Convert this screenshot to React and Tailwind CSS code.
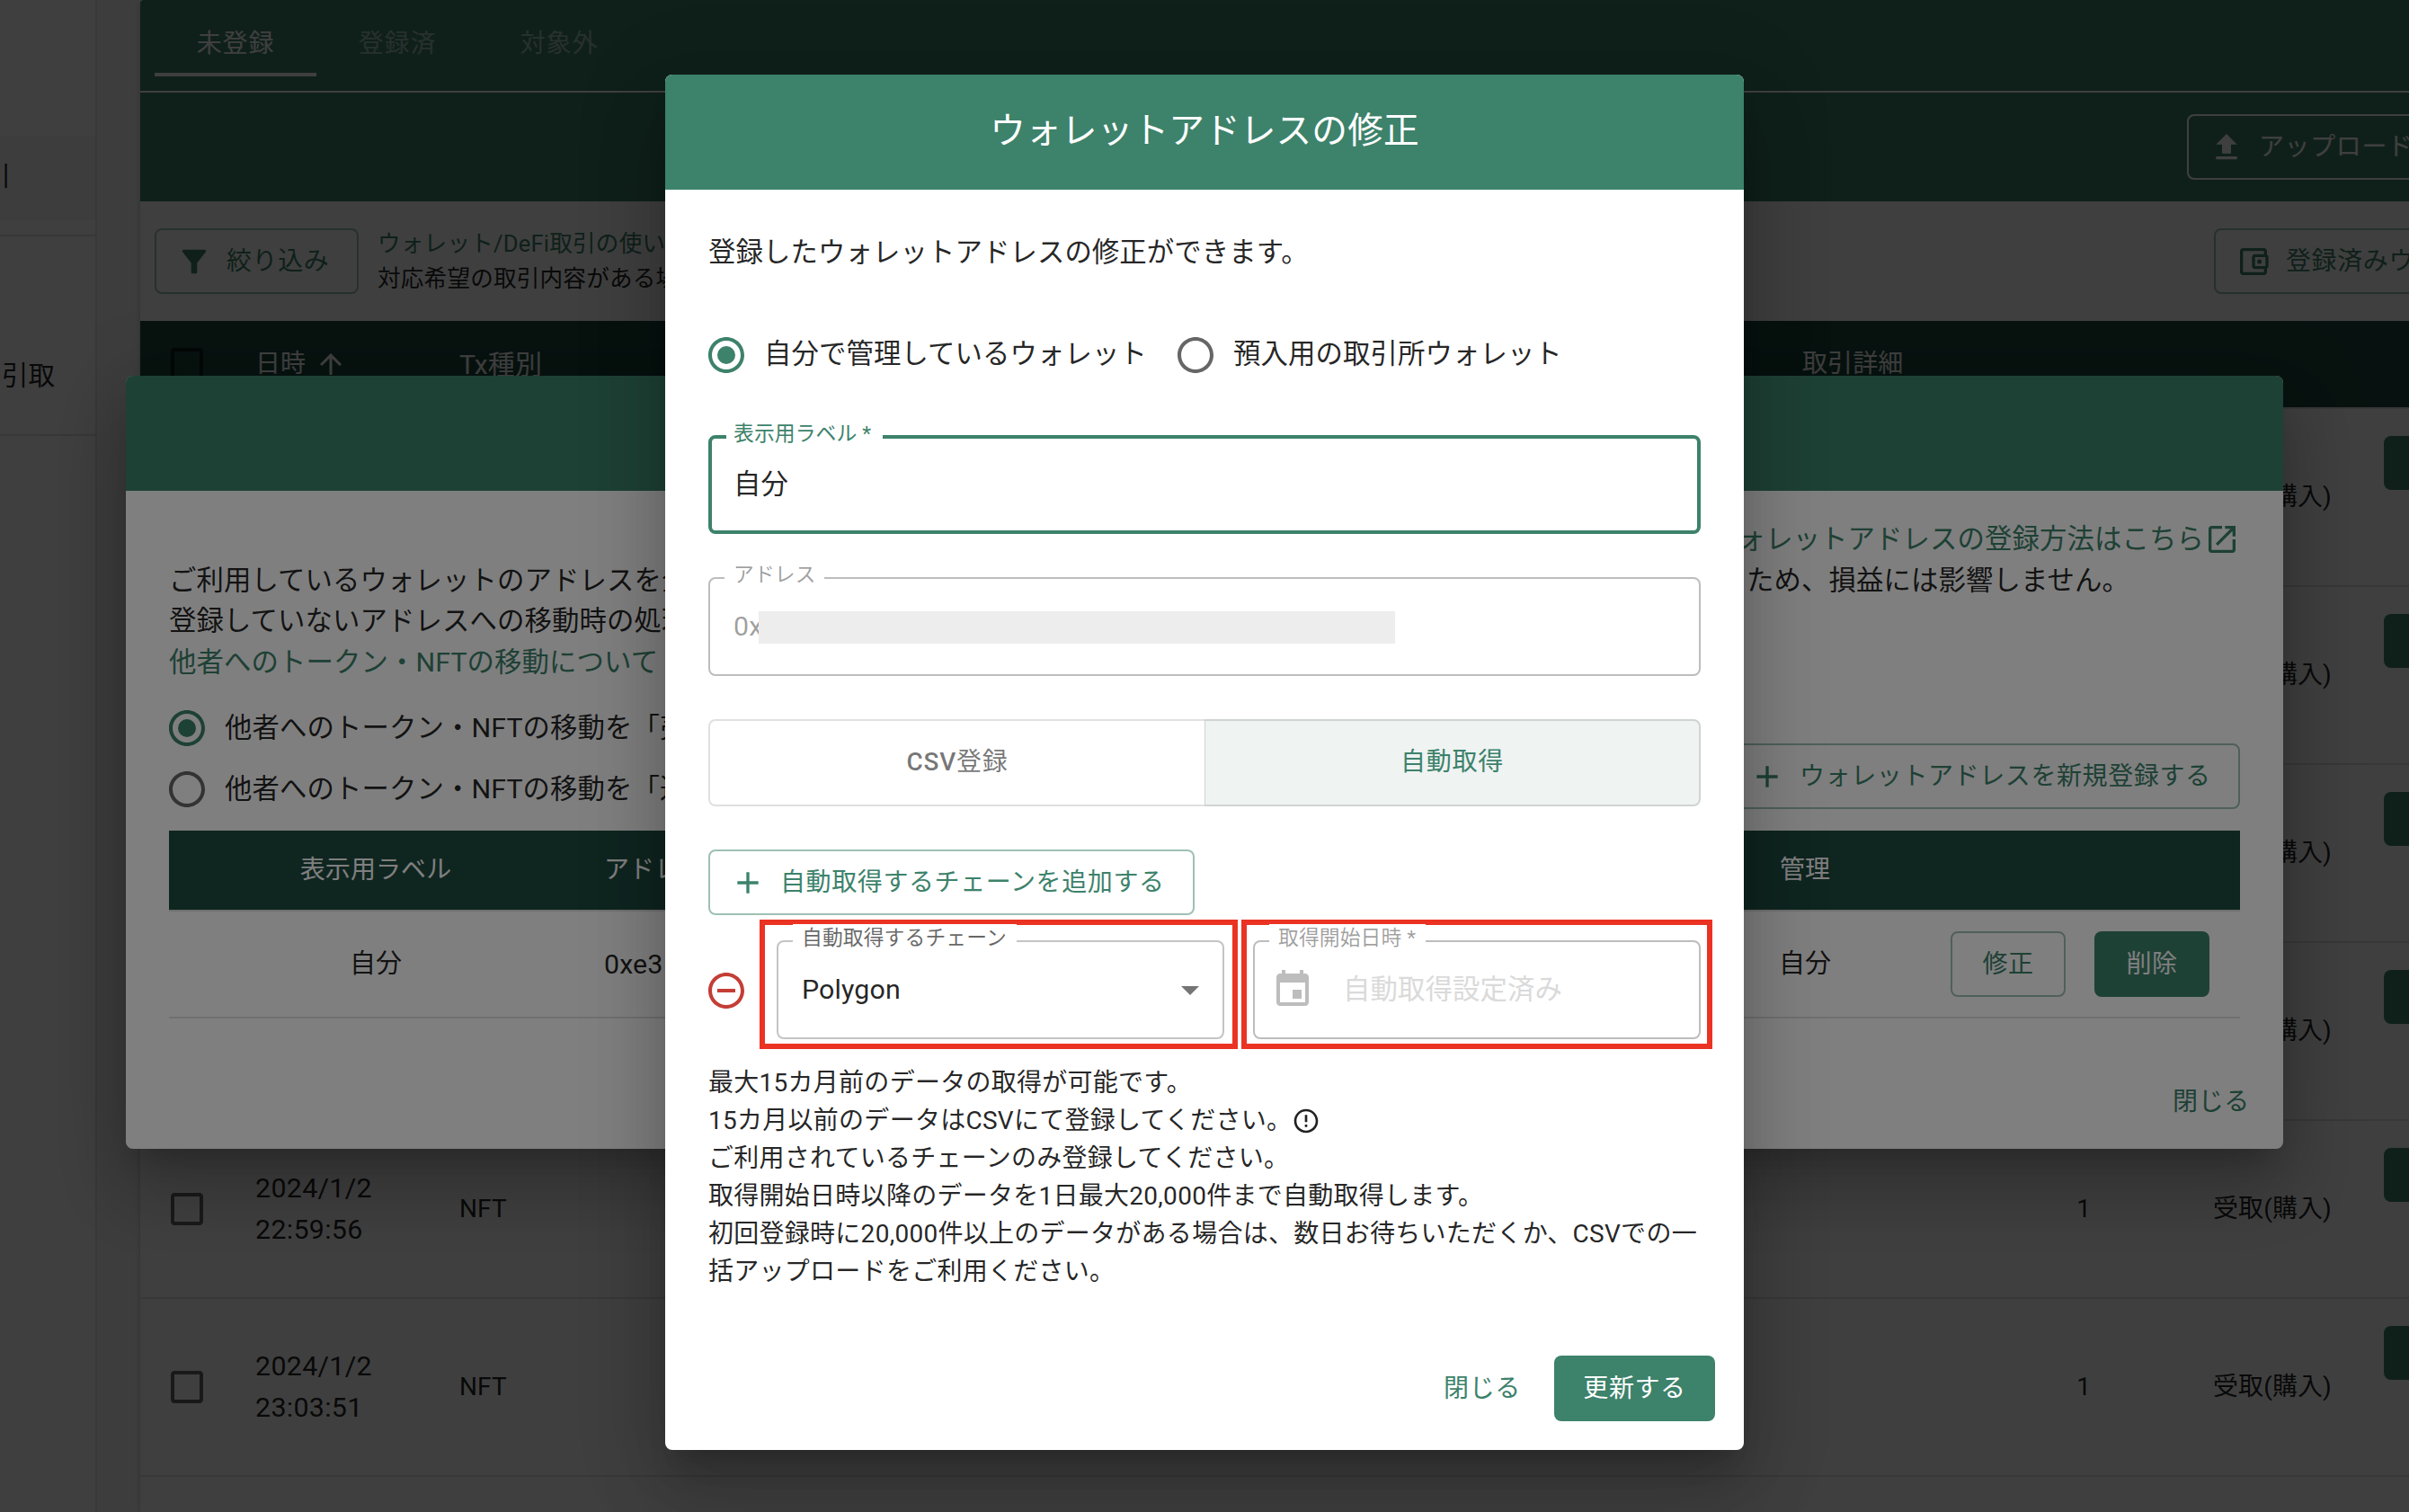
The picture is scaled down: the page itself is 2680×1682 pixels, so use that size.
import React from "react";
import clsx from "clsx";

const ICONS = {
  filter: "M4.25 5.61C6.27 8.2 10 13 10 13v6c0 .55.45 1 1 1h2c.55 0 1-.45 1-1v-6s3.72-4.8 5.74-7.39c.51-.66.04-1.61-.79-1.61H5.04c-.83 0-1.3.95-.79 1.61z",
  upload: "M5 20h14v-2H5v2zm0-10h4v6h6v-6h4l-7-7-7 7z",
  wallet:
    "M21 7.28V5c0-1.1-.9-2-2-2H5c-1.11 0-2 .9-2 2v14c0 1.1.89 2 2 2h14c1.1 0 2-.9 2-2v-2.28c.59-.35 1-.98 1-1.72V9c0-.74-.41-1.38-1-1.72zM20 9v6h-7V9h7zM5 19V5h14v2h-6c-1.1 0-2 .9-2 2v6c0 1.1.9 2 2 2h6v2H5zM16 10.5a1.5 1.5 0 1 0 0 3 1.5 1.5 0 0 0 0-3z",
  arrowUp: "M4 12l1.41 1.41L11 7.83V20h2V7.83l5.58 5.59L20 12l-8-8-8 8z",
  open: "M19 19H5V5h7V3H5c-1.11 0-2 .9-2 2v14c0 1.1.89 2 2 2h14c1.1 0 2-.9 2-2v-7h-2v7zM14 3v2h3.59l-9.83 9.83 1.41 1.41L19 6.41V10h2V3h-7z",
  add: "M19 13h-6v6h-2v-6H5v-2h6V5h2v6h6v2z",
  remove: "M7 11v2h10v-2H7zm5-9C6.48 2 2 6.48 2 12s4.48 10 10 10 10-4.48 10-10S17.52 2 12 2zm0 18c-4.41 0-8-3.59-8-8s3.59-8 8-8 8 3.59 8 8-3.59 8-8 8z",
  dropDown: "M7 10l5 5 5-5z",
  event:
    "M17 12h-5v5h5v-5zM16 1v2H8V1H6v2H5c-1.11 0-1.99.9-1.99 2L3 19c0 1.1.89 2 2 2h14c1.1 0 2-.9 2-2V5c0-1.1-.9-2-2-2h-1V1h-2zm3 18H5V8h14v11z",
  error:
    "M11 15h2v2h-2v-2zm0-8h2v6h-2V7zm.99-5C6.47 2 2 6.48 2 12s4.47 10 9.99 10C17.52 22 22 17.52 22 12S17.52 2 11.99 2zM12 20c-4.42 0-8-3.58-8-8s3.58-8 8-8 8 3.58 8 8-3.58 8-8 8z",
  checkbox: "M19 5v14H5V5h14m0-2H5c-1.1 0-2 .9-2 2v14c0 1.1.9 2 2 2h14c1.1 0 2-.9 2-2V5c0-1.1-.9-2-2-2z",
  radio: "M12 2C6.48 2 2 6.48 2 12s4.48 10 10 10 10-4.48 10-10S17.52 2 12 2zm0 18c-4.42 0-8-3.58-8-8s3.58-8 8-8 8 3.58 8 8-3.58 8-8 8z",
};

const rows = [
  { date: "2024/1/2", time: "22:43:11" },
  { date: "2024/1/2", time: "22:47:35" },
  { date: "2024/1/2", time: "22:51:23" },
  { date: "2024/1/2", time: "22:55:47" },
  { date: "2024/1/2", time: "22:59:56" },
  { date: "2024/1/2", time: "23:03:51" },
];

const Icon = ({ name, className }) => (
  <svg viewBox="0 0 24 24" fill="currentColor" className={clsx("shrink-0", className)}>
    <path d={ICONS[name]} />
  </svg>
);

const Button = ({ icon, className, children }) => (
  <button
    className={clsx(
      "flex h-[73px] shrink-0 items-center rounded-lg text-[28px] tracking-[0.6px] whitespace-nowrap",
      icon ? "justify-start pl-[22px]" : "justify-center",
      className
    )}
  >
    {icon && <Icon name={icon} className="mr-4 size-10" />}
    <span>{children}</span>
  </button>
);

const Radio = ({ checked, children }) => (
  <label className="flex items-center whitespace-nowrap">
    <svg
      viewBox="0 0 24 24"
      fill="currentColor"
      className={clsx("mr-[18px] -ml-1 size-12 shrink-0", checked ? "text-[#3d826b]" : "text-black/60")}
    >
      <path d={ICONS.radio} />
      {checked && <circle cx="12" cy="12" r="5" />}
    </svg>
    <span className="-mt-0.5">{children}</span>
  </label>
);

// Outlined text field with the label sitting on the top border
const Field = ({ label, labelClass, className, children }) => (
  <div className={clsx("relative flex h-[110px] items-center rounded-lg", className)}>
    <span
      className={clsx(
        "absolute flex h-8 items-center bg-white text-[22.8px] leading-8 whitespace-nowrap",
        labelClass
      )}
    >
      {label}
    </span>
    {children}
  </div>
);

const Sidebar = () => (
  <aside className="flex w-[108px] shrink-0 flex-col overflow-hidden border-r-2 border-black/12 bg-white pt-[151px]">
    <div className="flex h-[94px] items-center bg-black/4">
      <span className="-ml-[17px] text-[29px]">引</span>
    </div>
    <div className="mt-4 h-[2px] bg-black/12" />
    <div className="flex h-[220px] items-center pt-[91px] pl-0.5">
      <span className="text-[29.5px]">引取</span>
    </div>
    <div className="h-[2px] bg-black/12" />
  </aside>
);

const TransactionPage = () => (
  <div className="flex h-[1682px] w-[2680px] overflow-hidden bg-[#f5f5f5]">
    <Sidebar />
    <main className="ml-12 flex w-[2524px] shrink-0 flex-col rounded-tl bg-white shadow-[0_2px_6px_rgba(0,0,0,0.2)]">
      <div className="flex h-[103px] shrink-0 items-start rounded-tl border-b-2 border-white bg-[#3d826b] pl-4 text-[28px] tracking-[0.8px] text-white">
        <div className="flex h-[85px] w-[180px] items-center justify-center border-b-4 border-white pt-4">未登録</div>
        <div className="flex h-[85px] w-[180px] items-center justify-center pt-3 opacity-50">登録済</div>
        <div className="flex h-[85px] w-[180px] items-center justify-center pt-3 opacity-50">対象外</div>
      </div>
      <div className="flex h-[121px] shrink-0 items-center bg-[#3d826b] pl-[2277px]">
        <Button icon="upload" className="w-[320px] border-2 border-white text-white">
          アップロード
        </Button>
      </div>
      <div className="flex h-[133px] shrink-0 items-center pl-4">
        <Button icon="filter" className="w-[227px] border-2 border-[#3d826b]/50 text-[#3d826b]">
          絞り込み
        </Button>
        <div className="ml-[21px] flex w-[2043px] shrink-0 flex-col text-[25.6px] leading-[38.4px] tracking-[0.2px]">
          <span className="text-[#3d826b]">ウォレット/DeFi取引の使い方はこちら</span>
          <span>対応希望の取引内容がある場合はこちら</span>
        </div>
        <Button icon="wallet" className="w-[400px] border-2 border-[#3d826b]/50 text-[#3d826b]">
          登録済みウォレット
        </Button>
      </div>
      <div className="flex h-[98px] shrink-0 items-center border-b-2 border-[#e0e0e0] bg-[#1e4a40] text-[28px] text-white">
        <Icon name="checkbox" className="ml-7 size-12 text-black/60" />
        <div className="ml-[52px] flex w-[227px] items-center">
          日時
          <Icon name="arrowUp" className="ml-2.5 size-9" />
        </div>
        <div className="w-[1494px] text-[30px]">Tx種別</div>
        <div>取引詳細</div>
      </div>
      {rows.map((row) => (
        <div key={row.time} className="flex h-[198px] shrink-0 items-center border-b-2 border-[#e0e0e0] text-[28px]">
          <Icon name="checkbox" className="ml-7 size-12 text-black/60" />
          <div className="ml-[52px] w-[227px] shrink-0 text-[30.4px] leading-[46px] tracking-[0.3px]">
            {row.date}
            <br />
            {row.time}
          </div>
          <div className="w-[1703px] shrink-0">NFT</div>
          <div className="w-[112px] shrink-0 text-right">1</div>
          <div className="ml-[136px] w-[190px] shrink-0">受取(購入)</div>
          <div className="mb-[76px] h-[60px] w-[100px] shrink-0 rounded-lg bg-[#3d826b]" />
        </div>
      ))}
    </main>
  </div>
);

const WalletListDialog = () => (
  <div className="flex h-[860px] w-[2400px] flex-col overflow-hidden rounded-lg bg-white">
    <div className="h-32 shrink-0 bg-[#3d826b]" />
    <div className="flex flex-col px-12 pt-[31px] leading-[45.6px] whitespace-nowrap">
      <div className="flex items-center justify-end text-[#3d826b]">
        ウォレットアドレスの登録方法はこちら
        <Icon name="open" className="size-10" />
      </div>
      <div className="flex w-[2181px] justify-between">
        <span>ご利用しているウォレットのアドレスを全て登録してください。</span>
        <span>ため、損益には影響しません。</span>
      </div>
      <div>登録していないアドレスへの移動時の処理を選択してください。</div>
      <div className="text-[#3d826b]">他者へのトークン・NFTの移動について</div>
    </div>
    <div className="flex h-[165px] justify-between px-12 pt-[27px]">
      <div className="flex flex-col gap-5">
        <Radio checked>他者へのトークン・NFTの移動を「売却」として扱う</Radio>
        <Radio>他者へのトークン・NFTの移動を「送付」として扱う</Radio>
      </div>
      <Button icon="add" className="mt-[41px] w-[570px] border-2 border-[#3d826b]/50 text-[#3d826b]">
        ウォレットアドレスを新規登録する
      </Button>
    </div>
    <div className="mx-12 flex h-[90px] shrink-0 items-center border-b-2 border-[#e0e0e0] bg-[#1e4a40] text-[28px] text-white">
      <div className="w-[460px] text-center">表示用ラベル</div>
      <div className="ml-6 w-[1308px]">アドレス</div>
      <div>管理</div>
    </div>
    <div className="mx-12 flex h-[119px] shrink-0 items-center border-b-2 border-[#e0e0e0]">
      <div className="w-[460px] text-center text-[29px]">自分</div>
      <div className="ml-6 w-[1307px]">0xe3</div>
      <div className="w-[191px] text-[29px]">自分</div>
      <Button className="w-32 border-2 border-[#3d826b]/50 text-[#3d826b]">修正</Button>
      <Button className="ml-8 w-32 bg-[#3d826b] text-white">削除</Button>
    </div>
    <div className="mt-auto flex justify-end p-4">
      <Button className="w-32 text-[#3d826b]">閉じる</Button>
    </div>
  </div>
);

const EditWalletDialog = () => (
  <div className="flex h-[1530px] w-[1200px] flex-col overflow-hidden rounded-lg bg-white">
    <div className="flex h-32 shrink-0 items-center justify-center bg-[#3d826b] pb-0.5 text-[39.7px] text-white">
      ウォレットアドレスの修正
    </div>
    <div className="flex flex-col px-12">
      <p className="mt-[47px] leading-[46px]">登録したウォレットアドレスの修正ができます。</p>
      <div className="mt-[67px] flex h-12 items-center gap-[34px]">
        <Radio checked>自分で管理しているウォレット</Radio>
        <Radio>預入用の取引所ウォレット</Radio>
      </div>

      <Field
        label="表示用ラベル *"
        className="mt-[65px] border-4 border-[#3d826b] pl-6"
        labelClass="-top-[21px] left-4 w-[174px] pl-2 text-[#3d826b]"
      >
        自分
      </Field>

      <Field
        label="アドレス"
        className="mt-12 border-2 border-[#bdbdbd] pl-[26px] text-black/38"
        labelClass="-top-5 left-4 w-[111px] pl-2.5"
      >
        <span className="w-7">0x</span>
        <span className="relative mt-px h-9 w-[708px] bg-[#ededed]" />
      </Field>

      <div className="mt-12 flex h-[97px] text-[28px] tracking-[0.7px]">
        <div className="flex w-[552px] items-center justify-center rounded-l-lg border-2 border-r-0 border-[#e0e0e0] pb-0.5 text-black/54">
          <span className="font-medium">CSV</span>登録
        </div>
        <div className="flex w-[552px] items-center justify-center rounded-r-lg border-2 border-l border-[#cfd4d3] bg-[#eff3f2] pb-0.5 text-[#3d826b]">
          自動取得
        </div>
      </div>

      <Button icon="add" className="mt-12 w-[541px] border-2 border-[#3d826b]/50 text-[#3d826b]">
        自動取得するチェーンを追加する
      </Button>

      <div className="mt-[5px] -mr-[13px] flex items-center">
        <Icon name="remove" className="mt-[13px] -ml-1 size-12 text-[#c43e35]" />
        <div className="ml-[13px] w-[532px] border-6 border-[#eb3323] px-[13px] pt-[17px] pb-[5px]">
          <Field
            label="自動取得するチェーン"
            className="w-[498px] border-2 border-[#c4c4c4] pl-[26px]"
            labelClass="-top-5 left-4 w-[249px] pl-2.5 text-black/60"
          >
            <span className="text-black/87">Polygon</span>
            <Icon name="dropDown" className="mr-3 ml-auto size-12 text-black/54" />
          </Field>
        </div>
        <div className="ml-1 w-[524px] border-6 border-[#eb3323] px-[7px] pt-[17px] pb-[5px]">
          <Field
            label="取得開始日時 *"
            className="w-[498px] border-2 border-[#bdbdbd] pl-[18px]"
            labelClass="-top-5 left-4 w-[174px] pl-2.5 text-black/38"
          >
            <Icon name="event" className="mr-8 size-12 text-[#bdbdbd]" />
            <span className="text-[#dadada]">自動取得設定済み</span>
          </Field>
        </div>
      </div>

      <div className="mt-[17px] text-[28px] leading-[42px] tracking-[0.27px] whitespace-nowrap">
        <p>最大15カ月前のデータの取得が可能です。</p>
        <p className="flex items-center">
          15カ月以前のデータはCSVにて登録してください。
          <Icon name="error" className="size-8" />
        </p>
        <p>ご利用されているチェーンのみ登録してください。</p>
        <p>取得開始日時以降のデータを1日最大20,000件まで自動取得します。</p>
        <p>初回登録時に20,000件以上のデータがある場合は、数日お待ちいただくか、CSVでの一</p>
        <p>括アップロードをご利用ください。</p>
      </div>
    </div>
    <div className="mt-auto flex justify-end gap-4 p-8">
      <Button className="w-32 text-[#3d826b]">閉じる</Button>
      <Button className="w-[179px] bg-[#3d826b] text-white">更新する</Button>
    </div>
  </div>
);

const SHADOW =
  "rounded-lg shadow-[0_22px_30px_-14px_rgba(0,0,0,0.2),0_48px_76px_6px_rgba(0,0,0,0.14),0_18px_92px_16px_rgba(0,0,0,0.12)]";

const App = () => {
  return (
    <div
      lang="ja"
      className="relative h-[1682px] w-[2680px] overflow-hidden font-['Roboto','Noto_Sans_CJK_JP',sans-serif] text-[30.4px] leading-normal tracking-[0.1px] text-black/87"
    >
      <TransactionPage />
      <div className="absolute inset-0 flex justify-center bg-black/50 pt-[418px]">
        <div className={clsx("h-[860px]", SHADOW)}>
          <WalletListDialog />
        </div>
      </div>
      <div className="absolute inset-0 flex justify-center bg-black/50 pt-[83px]">
        <div className={clsx("h-[1530px]", SHADOW)}>
          <EditWalletDialog />
        </div>
      </div>
    </div>
  );
};

export default App;
